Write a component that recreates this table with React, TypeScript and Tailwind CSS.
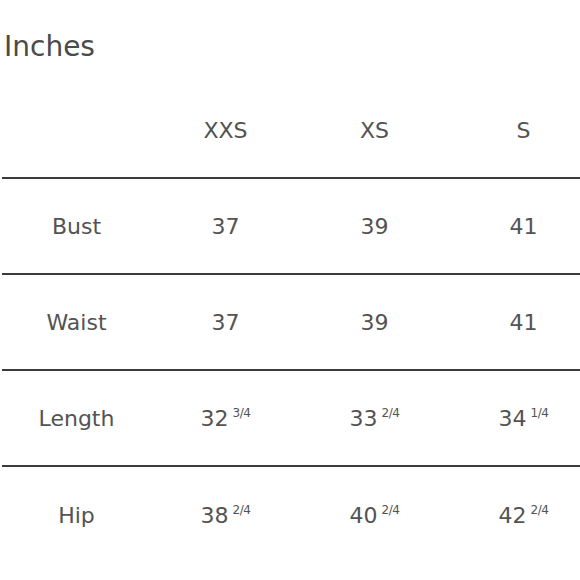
const sizes = ['XXS', 'XS', 'S'];

const rows: { label: string; values: [string, string?][] }[] = [
  { label: 'Bust', values: [['37'], ['39'], ['41']] },
  { label: 'Waist', values: [['37'], ['39'], ['41']] },
  { label: 'Length', values: [['32', '3/4'], ['33', '2/4'], ['34', '1/4']] },
  { label: 'Hip', values: [['38', '2/4'], ['40', '2/4'], ['42', '2/4']] },
];

function Cell({ value, frac }: { value: string; frac?: string }) {
  return (
    <div className="flex items-center justify-center">
      <span>{value}</span>
      {frac && <span className="ml-[4px] -mt-[10px] text-[12px] tracking-[-0.5px]">{frac}</span>}
    </div>
  );
}

export default function App() {
  return (
    <div
      className="w-[580px] h-[580px] overflow-hidden bg-white text-[#535353]"
      style={{ fontFamily: '"DejaVu Sans", Inter, sans-serif' }}
    >
      <h1 className="pl-[4px] pt-[33px] text-[28px] leading-[28px] font-normal text-[#4a4a4a]">Inches</h1>

      <div className="mt-[22px] ml-[2px] w-[596px] text-[22px] font-normal">
        {/* header */}
        <div className="grid grid-cols-4 h-[96px] items-center border-b-2 border-[#3c3c3c]">
          <div />
          {sizes.map((s) => (
            <div key={s} className="text-center">{s}</div>
          ))}
        </div>

        {rows.map((row, i) => (
          <div
            key={row.label}
            className={`grid grid-cols-4 h-[96px] items-center ${i < rows.length - 1 ? 'border-b-2 border-[#3c3c3c]' : ''}`}
          >
            <div className="text-center">{row.label}</div>
            {row.values.map(([v, f], j) => (
              <Cell key={j} value={v} frac={f} />
            ))}
          </div>
        ))}
      </div>
    </div>
  );
}
